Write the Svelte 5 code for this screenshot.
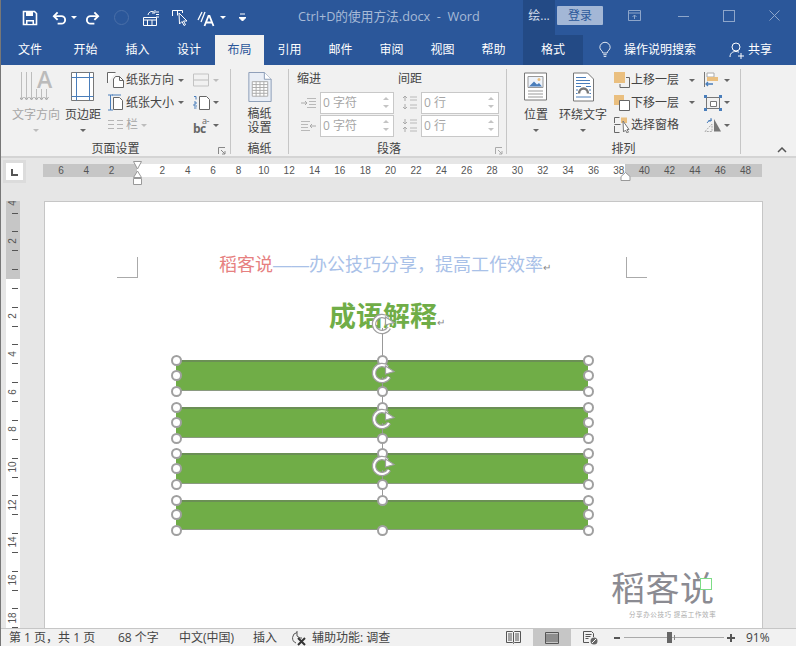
<script>
  const tabs = [
    { t: '文件', w: 58 }, { t: '开始', w: 53 }, { t: '插入', w: 51 }, { t: '设计', w: 52 },
    { t: '布局', w: 49, active: true }, { t: '引用', w: 51 }, { t: '邮件', w: 51 }, { t: '审阅', w: 51 },
    { t: '视图', w: 51 }, { t: '帮助', w: 51 }
  ];
  const hNums = [-6, -4, -2, 2, 4, 6, 8, 10, 12, 14, 16, 18, 20, 22, 24, 26, 28, 30, 32, 34, 36, 38, 40, 42, 44, 46, 48];
  const vNums = [-4, -2, 2, 4, 6, 8, 10, 12, 14, 16, 18];
  const vTicks = [];
  for (let n = -4; n <= 18; n += 2) { vTicks.push(n); }
  const y0 = 77.5;
  const shapes = [
    { h: 31, gap: 0, rise: 36 },
    { h: 31, gap: 16, rise: 34 },
    { h: 31, gap: 15, rise: 34 },
    { h: 30, gap: 16, rise: 34 }
  ];
</script>

<div class="app">
  <header class="title">
    <svg class="q-save" width="16" height="16" viewBox="0 0 16 16"><path d="M1.500 1.500h11l2 2v11h-13z" fill="none" stroke="#fff" stroke-width="1.600"/><path d="M4 2h7v4H4zM4 10h8v5H4z" fill="#fff"/><path d="M5.500 11.500h5v2.500h-5z" fill="#2b579a"/></svg>
    <svg class="q-undo" width="15" height="14" viewBox="0 0 16 14"><path d="M2 5h8a4 4 0 0 1 0 8H6" fill="none" stroke="#fff" stroke-width="2"/><path d="M6 1 2 5l4 4" fill="none" stroke="#fff" stroke-width="2"/></svg>
    <span class="caret white q-c1"></span>
    <svg class="q-redo" width="15" height="14" viewBox="0 0 16 14"><path d="M14 5H6a4 4 0 0 0 0 8h4" fill="none" stroke="#fff" stroke-width="2"/><path d="M10 1l4 4-4 4" fill="none" stroke="#fff" stroke-width="2"/></svg>
    <span class="ghost"></span>
    <svg class="q-a" width="18" height="18" viewBox="0 0 18 18"><path d="M1.500 8.500h13v8h-13z" fill="none" stroke="#fff"/><path d="M1.500 11h13M5.500 11v5.500M10 11v5.500" stroke="#fff"/><path d="M6 6a4 4 0 0 1 6-3" fill="none" stroke="#fff"/><path d="M13 1v3h-3" fill="none" stroke="#fff"/><path d="M14 3h3M14 5.500h3M14 8h3" stroke="#fff"/></svg>
    <svg class="q-b" width="18" height="18" viewBox="0 0 18 18"><path d="M1.500 7V1.500h10V4M1.500 1.500h5v5" fill="none" stroke="#fff"/><path d="M8 4l.5 11 2.500-2.500 2 4 1.500-.8-2-3.700H16z" fill="#2b579a" stroke="#fff"/></svg>
    <svg class="q-c" width="18" height="18" viewBox="0 0 18 18"><path d="M1 11 5 3M4 13 8 3" stroke="#fff" stroke-width="1.300"/><path d="M7.500 17l4-10h1l4 10M9.200 13.500h5.600" fill="none" stroke="#fff" stroke-width="1.800"/></svg>
    <span class="caret white q-c2"></span>
    <svg class="q-more" width="7" height="9" viewBox="0 0 7 9"><path d="M1 1h5M0 4.500h7L3.500 8z" stroke="#fff" fill="#fff"/></svg>
    <span class="doc-title">Ctrl+D的使用方法.docx  -  Word</span>
    <span class="ctx-tab">绘...</span>
    <span class="login">登录</span>
    <svg class="win-a" width="13" height="12" viewBox="0 0 13 12"><path d="M.5.500h12v10H.5zM.5 3h12M6.500 9V5M4.500 7l2-2 2 2" fill="none" stroke="#8ea6ca"/></svg>
    <span class="win-min"></span>
    <span class="win-max"></span>
    <svg class="win-x" width="11" height="11" viewBox="0 0 11 11"><path d="M.5.500l10 10M10.500.500l-10 10" stroke="#8ea6ca"/></svg>
  </header>

  <nav class="tabs">
    {#each tabs as tab}
      <span class="tab" class:active={tab.active} style="width:{tab.w}px">{tab.t}</span>
    {/each}
    <span class="ctx-main">格式</span>
    <svg class="bulb" width="12" height="18" viewBox="0 0 14 18"><path d="M4.500 12.500C4 9.500 1 9 1 6a6 6 0 0 1 12 0c0 3-3 3.500-3.500 6.500z" fill="none" stroke="#fff"/><path d="M5 14.500h4M5.500 16.500h3" stroke="#fff"/></svg>
    <span class="search">操作说明搜索</span>
    <svg class="user" width="16" height="17" viewBox="0 0 16 17"><circle cx="7" cy="5" r="4" fill="none" stroke="#fff"/><path d="M1 15c0-3.500 2-5.500 6-5.500 1 0 2 .2 3 .7" fill="none" stroke="#fff"/><path d="M12 11v6M9 14h6" stroke="#fff"/></svg>
    <span class="share">共享</span>
  </nav>

  <section class="ribbon">
    <div class="group g1">
      <div class="body">
        <div class="big disabled b-text">
          <span class="ti">
            <svg width="32" height="30" viewBox="0 0 32 30"><path d="M1.500 0v27M6.500 0v27M11.500 0v27M16.500 17v10M21.500 17v10M26.500 17v10" stroke="#bdbdbd"/><path d="M-.5 25l2 3 2-3M4.500 25l2 3 2-3M9.500 25l2 3 2-3M14.500 25l2 3 2-3M19.500 25l2 3 2-3M24.500 25l2 3 2-3" fill="none" stroke="#a8a8a8"/></svg>
            <span class="bigA">A</span>
          </span>
          <span class="lbl">文字方向</span>
          <span class="caret light"></span>
        </div>
        <div class="big b-margin">
          <svg width="24" height="30" viewBox="0 0 24 30"><path d="M.5.500h22v28H.5z" fill="#fff" stroke="#777"/><path d="M.5 5.500h22M.5 24.500h22M5.500.5v28M18.500.5v28" stroke="#4a7ebb"/></svg>
          <span class="lbl">页边距</span>
          <span class="caret"></span>
        </div>
        <div class="col c-paper">
          <div class="row">
            <svg width="17" height="16" viewBox="0 0 17 16"><path d="M.5 11V.5h8M8.500 4.500h4l4 4v7h-10V7z" fill="#fff" stroke="#666"/><path d="M12.500 4.500v4h4" fill="none" stroke="#666"/></svg>
            <span class="txt">纸张方向</span><span class="caret r-c1"></span>
          </div>
          <div class="row">
            <svg width="17" height="17" viewBox="0 0 17 17"><path d="M1 1h5M1 16h5M3.500 1v15" stroke="#4a7ebb"/><path d="M6.500 3.500h6l3 3v9h-9z" fill="#fff" stroke="#666"/><path d="M5 1h9" stroke="#4a7ebb"/></svg>
            <span class="txt">纸张大小</span><span class="caret r-c1"></span>
          </div>
          <div class="row disabled">
            <svg width="17" height="12" viewBox="0 0 17 12"><path d="M1 1.500h6M1 5.500h6M1 9.500h6M10 1.500h6M10 5.500h6M10 9.500h6" stroke="#b5b5b5"/></svg>
            <span class="txt">栏</span><span class="caret light r-c3"></span>
          </div>
        </div>
        <div class="col c-small">
          <div class="row disabled">
            <svg width="18" height="14" viewBox="0 0 18 14"><path d="M.5 1v12M15.500 1v12M.5 1h15M.5 13h15" fill="none" stroke="#c3c3c3"/><path d="M1 7h14" stroke="#bbb"/></svg>
            <span class="caret light r-s"></span>
          </div>
          <div class="row">
            <svg width="18" height="15" viewBox="0 0 18 15"><path d="M1 1.500h2v3M1 7h2v2H1v2h3M1 13h2.500" fill="none" stroke="#4a7ebb"/><path d="M6.500 1.500h7l3 3v10h-10z" fill="#fff" stroke="#666"/></svg>
            <span class="caret r-s"></span>
          </div>
          <div class="row">
            <span class="bc">bc<span class="sup">a-</span></span>
            <span class="caret r-s"></span>
          </div>
        </div>
      </div>
      <div class="glabel">页面设置<svg class="launch" width="8" height="8" viewBox="0 0 8 8"><path d="M.5 7V.5H7M3 3l4 4M7 4v3H4" fill="none" stroke="#888"/></svg></div>
    </div>

    <div class="group g2">
      <div class="body">
        <div class="big b-grid">
          <svg width="24" height="31" viewBox="0 0 24 31"><path d="M.5.500h16l7 7v23H.5z" fill="#e9eef6" stroke="#8a9bb5"/><path d="M16.500.5v7h7" fill="#fff" stroke="#8a9bb5"/><path d="M4 10h16v15H4z" fill="#fff" stroke="#aaa"/><path d="M4 13h16M4 16h16M4 19h16M4 22h16M8 10v15M12 10v15M16 10v15" stroke="#aaa"/></svg>
          <span class="lbl two">稿纸<br />设置</span>
        </div>
      </div>
      <div class="glabel">稿纸</div>
    </div>

    <div class="group g3">
      <div class="body para">
        <div class="pcol pc1">
          <div class="phead">缩进</div>
          <div class="field">
            <svg width="17" height="12" viewBox="0 0 17 12"><path d="M7 1.500h9M9 4.500h7M9 7.500h7M7 10.500h9" stroke="#b9b9b9"/><path d="M1 6h6M5 4l2 2-2 2" fill="none" stroke="#aaa"/></svg>
            <span class="input w74">0 字符<span class="spin"><i class="up"></i><i class="down"></i></span></span>
          </div>
          <div class="field">
            <svg width="17" height="12" viewBox="0 0 17 12"><path d="M1 1.500h9M1 4.500h7M1 7.500h7M1 10.500h9" stroke="#b9b9b9"/><path d="M16 6h-6M12 4l-2 2 2 2" fill="none" stroke="#aaa"/></svg>
            <span class="input w74">0 字符<span class="spin"><i class="up"></i><i class="down"></i></span></span>
          </div>
        </div>
        <div class="pcol pc2">
          <div class="phead ph2">间距</div>
          <div class="field">
            <svg width="17" height="15" viewBox="0 0 17 15"><path d="M4 1v5M2 3l2-2 2 2M4 14V9M2 12l2 2 2-2" fill="none" stroke="#aaa"/><path d="M9 2h7M9 5h7M9 10h7M9 13h7" stroke="#b9b9b9"/></svg>
            <span class="input w78">0 行<span class="spin"><i class="up"></i><i class="down"></i></span></span>
          </div>
          <div class="field">
            <svg width="17" height="15" viewBox="0 0 17 15"><path d="M4 6V1M2 4l2 2 2-2M4 9v5M2 11l2-2 2 2" fill="none" stroke="#aaa"/><path d="M9 2h7M9 5h7M9 10h7M9 13h7" stroke="#b9b9b9"/></svg>
            <span class="input w78">0 行<span class="spin"><i class="up"></i><i class="down"></i></span></span>
          </div>
        </div>
      </div>
      <div class="glabel gl-para">段落<svg class="launch lp" width="8" height="8" viewBox="0 0 8 8"><path d="M.5 7V.5H7M3 3l4 4M7 4v3H4" fill="none" stroke="#aaa"/></svg></div>
    </div>

    <div class="group g4">
      <div class="body">
        <div class="big b-pos">
          <svg width="24" height="29" viewBox="0 0 24 29"><path d="M.5.500h22v27H.5z" fill="#fff" stroke="#777"/><path d="M4 4h15v11H4z" fill="#eef3fa" stroke="#999"/><path d="M5 14l5-5 3 3 2-1.500 3 3.500z" fill="#4a7ebb"/><circle cx="15" cy="7" r="1.500" fill="#eabf7f"/><path d="M4 18.500h15M4 21.500h15M4 24.500h15" stroke="#999"/></svg>
          <span class="lbl">位置</span>
          <span class="caret"></span>
        </div>
        <div class="big b-wrap">
          <svg width="21" height="29" viewBox="0 0 21 29"><path d="M.5.500h14l6 6v22H.5z" fill="#fff" stroke="#777"/><path d="M3 5h10M3 8h14M3 11h14" stroke="#4a7ebb"/><path d="M6 21a4.500 5 0 0 1 9 0" fill="none" stroke="#777" stroke-width="2.500"/><path d="M3 14h5M13 14h5M3 17.500h2M16 17.500h2M3 21h1.500M16.500 21H18M3 24.500h15" stroke="#4a7ebb"/></svg>
          <span class="lbl">环绕文字</span>
          <span class="caret"></span>
        </div>
        <div class="col c-order">
          <div class="row">
            <svg width="16" height="16" viewBox="0 0 16 16"><path d="M0 0h11v11H0z" fill="#eabf7f"/><path d="M12 5.500h3.500v10H6V12" fill="none" stroke="#666"/></svg>
            <span class="txt">上移一层</span><span class="caret r-c4"></span>
          </div>
          <div class="row">
            <svg width="16" height="16" viewBox="0 0 16 16"><path d="M0 0h10v10H0z" fill="#eabf7f"/><path d="M5.500 5.500h10v10h-10z" fill="#fff" stroke="#666"/></svg>
            <span class="txt">下移一层</span><span class="caret r-c4"></span>
          </div>
          <div class="row">
            <svg width="16" height="16" viewBox="0 0 16 16"><path d="M.5 6V.5h5M.5 9v6.500h5" fill="none" stroke="#666"/><path d="M7 .5h6V6H7zM7 10h3" fill="#eabf7f"/><path d="M.5 7.500h6" stroke="#666"/><path d="M9 4l.5 11 2-2 1.500 3 1.500-.8-1.500-2.700h2z" fill="#fff" stroke="#777"/></svg>
            <span class="txt">选择窗格</span>
          </div>
        </div>
        <div class="col c-small2">
          <div class="row">
            <svg width="18" height="16" viewBox="0 0 18 16"><path d="M.5 0v15" stroke="#777"/><path d="M3 1h7v4H3z" fill="#fff" stroke="#aaa"/><path d="M3 5h11v4H3z" fill="#eabf7f"/><path d="M9 12H2M4 10l-2 2 2 2" fill="none" stroke="#4a7ebb" stroke-width="1.300"/></svg>
            <span class="caret r-s2"></span>
          </div>
          <div class="row">
            <svg width="18" height="16" viewBox="0 0 18 16"><path d="M2.500 2.500h13v11h-13z" fill="none" stroke="#777"/><path d="M6.500 6.500h6v5h-6z" fill="#fff" stroke="#777"/><path d="M0 0h3v3H0zM15 0h3v3h-3zM0 13h3v3H0zM15 13h3v3h-3z" fill="#4a7ebb"/></svg>
            <span class="caret r-s2"></span>
          </div>
          <div class="row">
            <svg width="18" height="14" viewBox="0 0 18 14"><path d="M1 13.500 8 6v7.500z" fill="none" stroke="#aaa" stroke-dasharray="2 1"/><path d="M10 1v12.500h7z" fill="#777"/><path d="M3 5a5 5 0 0 1 5-3M7 0v3h-3" fill="none" stroke="#4a7ebb"/></svg>
            <span class="caret r-s2"></span>
          </div>
        </div>
      </div>
      <div class="glabel gl-order">排列</div>
    </div>
    <svg class="chev" width="10" height="6" viewBox="0 0 10 6"><path d="M1 5l4-4 4 4" fill="none" stroke="#555" stroke-width="1.500"/></svg>
  </section>

  <main class="workspace">
    <div class="top-strip">
      <div class="corner"><span class="tabstop"></span></div>
      <div class="hruler">
        <span class="rg rg-l"></span><span class="rg rg-w"></span><span class="rg rg-r"></span>
        {#each hNums as n}
          <span class="hnum" style="left:{94 + n * 12.68}px">{Math.abs(n)}</span>
        {/each}
        <svg class="mk-left" width="11" height="25" viewBox="0 0 11 25"><path d="M1.500.5h8L5.500 8zM5.500 10l4 6.500h-8z" fill="#fff" stroke="#999"/><path d="M1.500 17.500h8v6h-8z" fill="#fff" stroke="#999"/></svg>
        <svg class="mk-right" width="11" height="9" viewBox="0 0 11 9"><path d="M5.500.5l4.500 4v4H1v-4z" fill="#fff" stroke="#999"/></svg>
      </div>
    </div>
    <div class="doc-area">
      <div class="vruler">
        <span class="vgray"></span>
        {#each vNums as n}
          <span class="vnum" style="top:{y0 + n * 18.85}px">{Math.abs(n)}</span>
        {/each}
        {#each vTicks as n}
          <i class="vtick" style="top:{y0 + n * 18.85 - 9.5}px"></i>
          <i class="vtick" style="top:{y0 + n * 18.85 + 9.5}px"></i>
        {/each}
      </div>
      <article class="page">
        <span class="crop crop-l"></span>
        <span class="crop crop-r"></span>
        <p class="hdr"><span class="red">稻客说</span><span class="blue"><span class="dash">——</span>办公技巧分享，提高工作效率</span><span class="ret">↵</span></p>
        <h1 class="h">成语解释<span class="ret2">↵</span></h1>
        <div class="shapes">
          {#each shapes as s}
            <div class="shape" style="height:{s.h}px;margin-top:{s.gap}px">
              <i class="conn" style="height:{s.rise}px"></i>
              <svg class="rot" style="top:{-s.rise - 14}px" width="26" height="24" viewBox="0 0 26 24">
                <path d="M19 15.900A8 8 0 1 1 17.500 6.200" fill="none" stroke="#a0a0a0" stroke-width="4.500"/>
                <path d="M19 15.900A8 8 0 1 1 17.500 6.200" fill="none" stroke="#fff" stroke-width="2"/>
                <path d="M15.500 5 24 10.500 15.500 13z" fill="#fff" stroke="#a0a0a0" stroke-width="1.200"/>
              </svg>
              <i class="hd tl"></i><i class="hd tc"></i><i class="hd tr"></i>
              <i class="hd ml"></i><i class="hd mr"></i>
              <i class="hd bl"></i><i class="hd bc-h"></i><i class="hd br"></i>
            </div>
          {/each}
        </div>
        <div class="logo">
          <div class="logo-main">稻客说</div>
          <span class="logo-box"></span>
          <div class="logo-sub">分享办公技巧 提高工作效率</div>
        </div>
      </article>
    </div>
  </main>

  <footer class="status">
    <span class="s1">第 1 页，共 1 页</span>
    <span class="s2">68 个字</span>
    <span class="s3">中文(中国)</span>
    <span class="s4">插入</span>
    <svg class="s5" width="17" height="16" viewBox="0 0 17 16"><path d="M6 2.500a5.500 5.500 0 0 0-1 10.500" fill="none" stroke="#555"/><path d="M6 1v5l3 2 2 0" fill="none" stroke="#555"/><path d="M7 8l7 7M14 8l-7 7" stroke="#333" stroke-width="2"/></svg>
    <span class="s6">辅助功能: 调查</span>
    <svg class="v1" width="15" height="13" viewBox="0 0 15 13"><path d="M.5.500h6l1 1 1-1h6v11h-6l-1 1-1-1h-6zM7.500 1.500v10M2 3h4M2 5h4M2 7h4M2 9h4M9 3h4M9 5h4M9 7h4M9 9h4" fill="none" stroke="#555"/></svg>
    <span class="v-active"><svg width="14" height="12" viewBox="0 0 14 12"><path d="M.5.500h13v11H.5zM1 3h12M1 5h12M1 7h12M1 9h12" fill="none" stroke="#555"/></svg></span>
    <svg class="v3" width="15" height="14" viewBox="0 0 15 14"><path d="M.5.500h8l2 2V6M.5.500v11H6M2.500 3.500h6M2.500 5.500h5M2.500 7.500h3" fill="none" stroke="#555"/><circle cx="11" cy="10" r="3.500" fill="#666"/><path d="M9 12l4-4" stroke="#fff"/></svg>
    <span class="z-minus"></span>
    <span class="z-track"><i class="z-thumb"></i><i class="z-tick"></i></span>
    <span class="z-plus"></span>
    <span class="z-val">91%</span>
  </footer>
</div>

<style>
  :global(body) { margin: 0; }
  .app {
    width: 796px; height: 646px; overflow: hidden; box-sizing: border-box;
    border-left: 1px solid #777; display: flex; flex-direction: column;
    font: 12px/16px "Open Sans", "Noto Sans CJK SC", sans-serif; color: #444; background: #e6e6e6;
  }
  svg { display: block; flex: none; }

  /* title */
  .title { height: 35px; flex: none; background: #2b579a; display: flex; align-items: center; color: #fff; }
  .q-save { margin-left: 21px; }
  .q-undo { margin-left: 14px; }
  .q-c1 { margin-left: 4px; }
  .q-redo { margin-left: 8px; }
  .ghost { width: 13px; height: 13px; border: 1px solid #4a6fa8; border-radius: 50%; margin-left: 14px; flex: none; }
  .q-a { margin-left: 13px; }
  .q-b { margin-left: 11px; }
  .q-c { margin-left: 8px; }
  .q-c2 { margin-left: 5px; }
  .q-more { margin-left: 13px; }
  .doc-title { margin: -3px 0 0 52px; width: 225px; color: #a7bad7; font-size: 12.700px; white-space: pre; flex: none; }
  .ctx-tab { width: 32px; height: 35px; line-height: 31px; background: #234a85; color: #d5deec; text-align: center; flex: none; }
  .login { width: 46px; height: 19px; margin: -4px 0 0 2px; background: #a3b7d6; border-radius: 1px; color: #2b579a; text-align: center; line-height: 19px; flex: none; }
  .win-a { margin: -4px 0 0 25px; }
  .win-min { width: 11px; height: 1px; background: #8ea6ca; margin: -3px 0 0 37px; flex: none; }
  .win-max { width: 10px; height: 10px; border: 1px solid #8ea6ca; margin: -4px 0 0 34px; flex: none; }
  .win-x { margin: -4px 0 0 34px; }

  /* tabs */
  .tabs { height: 30px; flex: none; background: #2b579a; display: flex; align-items: center; color: #fff; }
  .tab { height: 30px; line-height: 29px; text-align: center; flex: none; }
  .tab.active { background: #f1f1f1; color: #2b579a; }
  .ctx-main { width: 60px; height: 30px; line-height: 29px; background: #234a85; text-align: center; margin-left: 4px; flex: none; }
  .bulb { margin-left: 16px; }
  .search { margin-left: 13px; width: 72px; white-space: nowrap; flex: none; }
  .user { margin-left: 33px; }
  .share { margin-left: 3px; }

  /* ribbon */
  .ribbon { height: 93px; flex: none; box-sizing: border-box; background: #f1f1f1; border-bottom: 2px solid #d4d4d4; display: flex; padding-top: 4px; position: relative; color: #444; }
  .group { height: 85px; box-sizing: border-box; border-right: 1px solid #c6c6c6; display: flex; flex-direction: column; position: relative; flex: none; }
  .g1 { width: 230px; }
  .g2 { width: 58px; }
  .g3 { width: 218px; }
  .g4 { width: 234px; }
  .body { flex: 1; display: flex; min-height: 0; }
  .glabel { height: 18px; margin-bottom: -5px; line-height: 16px; text-align: center; flex: none; position: relative; }
  .launch { position: absolute; right: 4px; top: 6px; }
  .launch.lp { right: 3px; }
  .gl-para { padding-right: 17px; }
  .big { display: flex; flex-direction: column; align-items: center; flex: none; padding-top: 3px; }
  .big > svg { height: 30px; }
  .ti { position: relative; display: block; width: 32px; height: 30px; flex: none; }
  .bigA { position: absolute; left: 17px; top: -3px; font: 600 23px/20px "Open Sans", sans-serif; color: #bbb; }
  .big .lbl { margin-top: 5px; line-height: 16px; white-space: nowrap; }
  .big .lbl.two { line-height: 14px; text-align: center; }
  .big .caret { margin-top: 6px; }
  .b-text { width: 48px; margin-left: 11px; }
  .b-margin { width: 38px; margin-left: 4px; }
  .b-grid { width: 57px; }
  .b-pos { width: 36px; margin-left: 11px; }
  .b-wrap { width: 50px; margin-left: 4px; }
  .disabled, .disabled .txt { color: #a6a6a6; }
  .col { display: flex; flex-direction: column; flex: none; }
  .row { display: flex; align-items: center; height: 22.500px; flex: none; }
  .txt { margin-left: 2px; white-space: nowrap; width: 48px; flex: none; }
  .disabled .txt { width: 12px; }
  .c-paper { margin-left: 5px; width: 86px; }
  .r-c1 { margin-left: 4px; }
  .r-c3 { margin-left: 3px; }
  .c-small { width: 36px; }
  .r-s { margin-left: 2px; }
  .c-order { margin-left: 6px; width: 90px; }
  .c-order .txt { margin-left: 1px; }
  .r-c4 { margin-left: 10px; }
  .r-s2 { margin-left: 2px; }
  .c-small2 { width: 34px; }
  .caret { display: inline-block; width: 0; height: 0; border: 3px solid transparent; border-top: 3px solid #666; border-bottom: 0; flex: none; }
  .caret.white { border-top-color: #fff; }
  .caret.light { border-top-color: #bdbdbd; }
  .bc { position: relative; display: block; width: 18px; height: 17px; flex: none; font: 700 12px/10px "Open Sans", sans-serif; color: #666; padding-top: 7px; box-sizing: border-box; letter-spacing: -.5px; }
  .sup { position: absolute; left: 9px; top: 0; font: 400 9px/7px "Open Sans", sans-serif; }

  .para { padding-left: 8px; }
  .pcol { flex: none; display: flex; flex-direction: column; }
  .pc1 { width: 101px; }
  .phead { height: 22px; line-height: 20px; flex: none; }
  .ph2 { margin-left: 0; }
  .field { display: flex; align-items: center; height: 23px; margin-left: 3px; flex: none; }
  .input { box-sizing: border-box; height: 22px; background: #fff; border: 1px solid #c8c8c8; color: #a6a6a6; margin-left: 3px; padding-left: 2px; line-height: 20px; position: relative; flex: none; }
  .w74 { width: 74px; }
  .w78 { width: 78px; }
  .spin { position: absolute; right: 4px; top: 4px; display: flex; flex-direction: column; gap: 5px; }
  .spin i { display: block; width: 0; height: 0; border: 3px solid transparent; }
  .spin .up { border-top: 0; border-bottom: 3px solid #c4c4c4; }
  .spin .down { border-bottom: 0; border-top: 3px solid #c4c4c4; }
  .chev { position: absolute; left: 776px; top: 82px; }

  /* workspace */
  .workspace { flex: 1; min-height: 0; background: #e6e6e6; display: flex; flex-direction: column; }
  .top-strip { height: 43px; flex: none; display: flex; }
  .corner { width: 23px; height: 23px; margin: 2px 0 0 2px; background: #dcdcdc; display: flex; align-items: center; justify-content: center; flex: none; }
  .tabstop { width: 17px; height: 17px; background: #fff; position: relative; flex: none; }
  .tabstop::after { content: ""; position: absolute; left: 5px; top: 6px; width: 5px; height: 5px; border-left: 2px solid #555; border-bottom: 2px solid #555; }
  .hruler { position: relative; width: 719px; height: 13px; margin: 6px 0 0 17px; display: flex; }
  .rg { height: 13px; display: block; flex: none; }
  .rg-l { width: 94px; background: #c6c6c6; }
  .rg-w { width: 488px; background: #fff; }
  .rg-r { width: 137px; background: #c6c6c6; }
  .hnum { position: absolute; top: 0; width: 20px; margin-left: -10px; text-align: center; font: 10px/13px "Liberation Sans", sans-serif; color: #555; }
  .mk-left { position: absolute; left: 89px; top: -3px; }
  .mk-right { position: absolute; left: 577px; top: 8px; }
  .doc-area { flex: 1; min-height: 0; display: flex; }
  .vruler { width: 14px; margin-left: 5px; position: relative; background: #fff; flex: none; overflow: hidden; }
  .vgray { position: absolute; left: 0; top: 0; right: 0; height: 78px; background: #c6c6c6; }
  .vnum { position: absolute; left: 0; width: 14px; margin-top: -7px; height: 14px; text-align: center; font: 10px/14px "Liberation Sans", sans-serif; color: #555; transform: rotate(-90deg); }
  .vtick { position: absolute; left: 6px; width: 6px; height: 1px; background: #555; }
  .page { position: relative; box-sizing: border-box; width: 719px; height: 100%; margin-left: 24px; background: #fff; border: 1px solid #c6c6c6; border-bottom: 0; flex: none; }
  .crop { position: absolute; top: 55px; width: 20px; height: 20px; border-bottom: 1px solid #aaa; }
  .crop-l { left: 72px; border-right: 1px solid #aaa; }
  .crop-r { left: 581px; border-left: 1px solid #aaa; }
  .hdr { margin: 49px 0 0 174px; font: 18px/24px "Noto Sans CJK SC", sans-serif; white-space: nowrap; }
  .dash { font-family: "Liberation Sans", sans-serif; }
  .red { color: #e68080; }
  .blue { color: #a9c1e8; }
  .ret { color: #888; font-size: 10px; }
  .h { margin: 16px 0 0 284px; font: 700 27px/40px "Noto Sans CJK SC", sans-serif; color: #70ad47; white-space: nowrap; }
  .ret2 { color: #888; font-size: 10px; font-weight: 400; }
  .shapes { margin: 18px 0 0 131px; width: 412px; }
  .shape { position: relative; box-sizing: border-box; background: #70ad47; border-top: 2px solid #6b8f55; border-bottom: 1px solid #8a9a80; }
  .conn { position: absolute; left: 206px; bottom: calc(100% - 2px); width: 1px; background: #999; z-index: 1; }
  .rot { position: absolute; left: 194px; z-index: 3; }
  .hd { position: absolute; box-sizing: border-box; width: 11px; height: 11px; border: 2px solid #a0a0a0; border-radius: 50%; background: #fff; z-index: 2; margin: -5.500px 0 0 -5.500px; }
  .tl { left: 0; top: -2px; }
  .tc { left: 206px; top: -2px; }
  .tr { left: 412px; top: -2px; }
  .ml { left: 0; top: calc(50% - 1px); }
  .mr { left: 412px; top: calc(50% - 1px); }
  .bl { left: 0; top: calc(100% + 1px); }
  .bc-h { left: 206px; top: calc(100% + 1px); }
  .br { left: 412px; top: calc(100% + 1px); }
  .logo { position: absolute; left: 566px; top: 365px; width: 106px; }
  .logo-main { font: 34px/40px "Noto Sans CJK SC", sans-serif; color: #8b8b92; letter-spacing: .5px; white-space: nowrap; }
  .logo-box { position: absolute; left: 89px; top: 11px; width: 10px; height: 10px; border: 1px solid #7ddc86; background: #fff; }
  .logo-sub { font: 6.500px/8px "Noto Sans CJK SC", sans-serif; color: #aaa; margin: 3px 0 0 18px; white-space: nowrap; letter-spacing: .6px; }

  /* status */
  .status { height: 18px; flex: none; box-sizing: border-box; background: #f1f1f1; border-top: 1px solid #c6c6c6; display: flex; align-items: center; color: #444; white-space: nowrap; line-height: 17px; }
  .status span { flex: none; }
  .s1 { margin-left: 8px; width: 90px; }
  .s2 { margin-left: 19px; width: 42px; }
  .s3 { margin-left: 19px; width: 55px; }
  .s4 { margin-left: 19px; width: 24px; }
  .s5 { margin-left: 14px; }
  .s6 { margin-left: 4px; width: 79px; }
  .v1 { margin-left: 115px; }
  .v-active { width: 38px; height: 17px; margin-left: 12px; background: #c6c6c6; display: flex; align-items: center; justify-content: center; }
  .v3 { margin-left: 12px; }
  .z-minus { width: 6px; height: 2px; background: #555; margin-left: 16px; }
  .z-track { width: 100px; height: 1px; background: #aaa; margin-left: 4px; position: relative; }
  .z-thumb { position: absolute; left: 43px; top: -5px; width: 5px; height: 11px; background: #666; }
  .z-tick { position: absolute; left: 50px; top: -2px; width: 1px; height: 5px; background: #888; }
  .z-plus { width: 8px; height: 8px; margin-left: 3px; background: linear-gradient(#555, #555) center/8px 2px no-repeat, linear-gradient(#555, #555) center/2px 8px no-repeat; }
  .z-val { margin-left: 11px; }
</style>
